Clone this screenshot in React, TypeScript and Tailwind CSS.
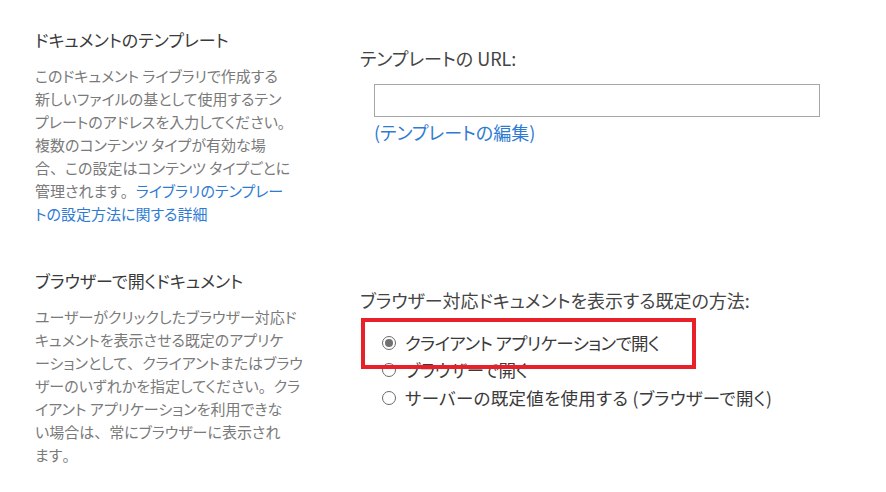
import React from "react";

const FONT = "[font-family:'Noto_Sans_CJK_JP',sans-serif] [font-feature-settings:'palt']";

// full-width punctuation keeps its room, as in the original
function P({ c }: { c: string }) {
  return <span className="[font-feature-settings:normal]">{c}</span>;
}

function Radio({ checked, label, track }: { checked?: boolean; label: string; track: string }) {
  return (
    <div className="flex items-center h-[27.5px] pl-[22px]">
      <span className="w-[14px] h-[14px] rounded-full border border-[#6a6a6a] flex items-center justify-center shrink-0">
        {checked && <span className="w-[8px] h-[8px] rounded-full bg-[#707070]" />}
      </span>
      <span className={`ml-[9px] text-[17.5px] leading-[24px] text-[#3a3a3a] whitespace-nowrap ${track}`}>{label}</span>
    </div>
  );
}

function Lines({ lines }: { lines: React.ReactNode[] }) {
  return (
    <p className="mt-[12px] text-[15px] leading-[23px] text-[#7a7a7a] whitespace-nowrap">
      {lines.map((l, i) => (
        <span key={i} className="block">{l}</span>
      ))}
    </p>
  );
}

export default function App() {
  return (
    <div className={`relative w-[886px] h-[492px] bg-white flex overflow-hidden ${FONT}`}>
      <div className="w-[360px] shrink-0 pl-[35px] pt-[28px]">
        <section>
          <h2 className="text-[17px] leading-[24px] text-[#3a3a3a]">ドキュメントのテンプレート</h2>
          <Lines
            lines={[
              "このドキュメント ライブラリで作成する",
              "新しいファイルの基として使用するテン",
              <>プレートのアドレスを入力してください<P c="。" /></>,
              "複数のコンテンツ タイプが有効な場",
              <>合<P c="、" />この設定はコンテンツ タイプごとに</>,
              <>管理されます<P c="。" /><a className="text-[#2f7bd3]">ライブラリのテンプレー</a></>,
              <a className="text-[#2f7bd3]">トの設定方法に関する詳細</a>,
            ]}
          />
        </section>
        <section className="mt-[44px]">
          <h2 className="text-[17px] leading-[24px] text-[#3a3a3a]">ブラウザーで開くドキュメント</h2>
          <Lines
            lines={[
              "ユーザーがクリックしたブラウザー対応ド",
              "キュメントを表示させる既定のアプリケ",
              <>ーションとして<P c="、" />クライアントまたはブラウ</>,
              <>ザーのいずれかを指定してください<P c="。" />クラ</>,
              "イアント アプリケーションを利用できな",
              <>い場合は<P c="、" />常にブラウザーに表示され</>,
              <>ます<P c="。" /></>,
            ]}
          />
        </section>
      </div>

      <div className="flex-1 pt-[46px]">
        <div className="text-[18px] leading-[24px] text-[#444]">テンプレートの URL:</div>
        <div className="pl-[14px] mt-[14px]">
          <input className="block w-[446px] h-[33px] border border-[#a6a6a6] bg-white outline-none" />
          <a className="block mt-[3px] text-[18px] leading-[24px] text-[#2f7bd3]">(テンプレートの編集)</a>
        </div>

        <div className="mt-[144px] text-[18px] leading-[24px] text-[#444]">ブラウザー対応ドキュメントを表示する既定の方法:</div>
        <div className="mt-[17px] flex flex-col">
          <Radio checked label="クライアント アプリケーションで開く" track="tracking-[-0.6px]" />
          <Radio label="ブラウザーで開く" track="tracking-[-0.3px]" />
          <Radio label="サーバーの既定値を使用する (ブラウザーで開く)" track="tracking-[0.3px]" />
        </div>
      </div>

      <div className="absolute left-[361px] top-[318px] w-[335px] h-[51px] border-4 border-[#e8202a]" />
    </div>
  );
}
